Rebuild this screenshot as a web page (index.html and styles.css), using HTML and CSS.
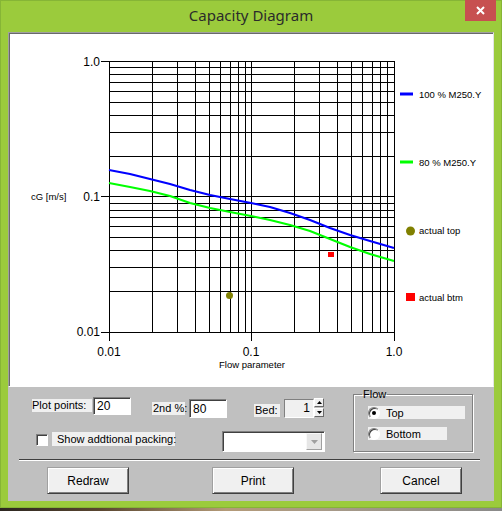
FILE: index.html
```html
<!DOCTYPE html>
<html lang="en">
<head>
    <meta charset="UTF-8">
    <title>Capacity Diagram</title>
    <link rel="stylesheet" href="styles.css">
</head>
<body>
    <div class="window">
        <div class="titlebar">
            <div class="title">Capacity Diagram</div>
            <div class="close">
                <svg width="9" height="9" viewBox="0 0 9 9"><path d="M1 1L8 8M8 1L1 8" stroke="#fff" stroke-width="2"/></svg>
            </div>
        </div>

        <div class="dialog">
            <div class="chart">
                <svg width="484" height="353" viewBox="9 33 484 353">
                    <!-- grid -->
                    <path class="grid" d="M109.5 61V333M152.5 61V333M177.5 61V333M195.5 61V333M209.5 61V333M220.5 61V333M230.5 61V333M238.5 61V333M245.5 61V333M251.5 61V333M294.5 61V333M319.5 61V333M337.5 61V333M351.5 61V333M362.5 61V333M372.5 61V333M380.5 61V333M387.5 61V333M394.5 61V333"/>
                    <path class="grid" d="M109 61.5H395M109 67.5H395M109 74.5H395M109 82.5H395M109 91.5H395M109 102.5H395M109 115.5H395M109 132.5H395M109 156.5H395M109 196.5H395M109 203.5H395M109 210.5H395M109 217.5H395M109 226.5H395M109 237.5H395M109 250.5H395M109 267.5H395M109 291.5H395M109 332.5H395"/>
                    <path class="grid" d="M101 61.5H109M101 196.5H109M101 332.5H109M109.5 333V341M251.5 333V341M394.5 333V341"/>

                    <!-- axis labels -->
                    <text class="num" x="100" y="66" text-anchor="end">1.0</text>
                    <text class="num" x="100" y="201" text-anchor="end">0.1</text>
                    <text class="num" x="100" y="336" text-anchor="end">0.01</text>
                    <text class="num" x="109" y="356" text-anchor="middle">0.01</text>
                    <text class="num" x="251" y="356" text-anchor="middle">0.1</text>
                    <text class="num" x="394" y="356" text-anchor="middle">1.0</text>
                    <text class="small" x="219" y="368">Flow parameter</text>
                    <text class="small" x="31" y="200">cG [m/s]</text>

                    <!-- curves -->
                    <polyline class="curve" stroke="#0000ff" points="109,170 130,174 150,179 170,184 190,190 210,195 230,199 251,203 270,207 290,213 310,220 330,228 350,235 370,241 394,248"/>
                    <polyline class="curve" stroke="#00ff00" points="109,183 130,187 150,191 170,196 190,203 210,208 230,212 251,216 270,220 290,225 310,231 330,239 350,247 370,254 394,261"/>

                    <!-- measured points -->
                    <circle cx="229.5" cy="295.5" r="3.5" fill="#808000"/>
                    <rect x="328" y="252" width="6" height="5" fill="#ff0000"/>

                    <!-- legend -->
                    <path d="M400 94H413" stroke="#0000ff" stroke-width="3"/>
                    <text class="small" x="419" y="98">100 % M250.Y</text>
                    <path d="M400 162H413" stroke="#00ff00" stroke-width="3"/>
                    <text class="small" x="419" y="166">80 % M250.Y</text>
                    <circle cx="410.5" cy="231" r="4.5" fill="#808000"/>
                    <text class="small" x="419" y="234">actual top</text>
                    <rect x="406" y="293" width="9" height="8" fill="#ff0000"/>
                    <text class="small" x="419" y="301">actual btm</text>
                </svg>
            </div>

            <div class="controls">
                <div class="form-area">
                    <div class="fields">
                        <div class="row row-top">
                            <span class="lbl lbl-plot">Plot points:</span>
                            <input class="edit edit-plot" type="text" value="20">
                            <span class="lbl lbl-2nd">2nd %:</span>
                            <input class="edit edit-2nd" type="text" value="80">
                            <span class="lbl lbl-bed">Bed:</span>
                            <div class="spin">
                                <span class="spin-val">1</span>
                                <div class="spin-btns">
                                    <span class="spin-btn"><svg width="5" height="3" viewBox="0 0 5 3"><path d="M2.5 0L5 3H0Z" fill="#000"/></svg></span>
                                    <span class="spin-btn"><svg width="5" height="3" viewBox="0 0 5 3"><path d="M0 0H5L2.5 3Z" fill="#000"/></svg></span>
                                </div>
                            </div>
                        </div>
                        <div class="row row-bottom">
                            <span class="check"></span>
                            <span class="lbl lbl-show">Show addtional packing:</span>
                            <div class="combo">
                                <span class="combo-btn"><svg width="7" height="4" viewBox="0 0 7 4"><path d="M0 0H7L3.5 4Z" fill="#a0a0a0"/></svg></span>
                            </div>
                        </div>
                    </div>

                    <fieldset class="flow">
                        <legend>Flow</legend>
                        <div class="radio-row radio-top"><span class="radio checked"></span>Top</div>
                        <div class="radio-row radio-bottom"><span class="radio"></span>Bottom</div>
                    </fieldset>
                </div>

                <div class="separator"></div>

                <div class="buttons">
                    <button class="btn btn-redraw">Redraw</button>
                    <button class="btn btn-print">Print</button>
                    <button class="btn btn-cancel">Cancel</button>
                </div>
            </div>
        </div>
    </div>
</body>
</html>
```

FILE: styles.css
```css
body {
    margin: 0;
    height: 511px;
    overflow: hidden;
    font-family: "Liberation Sans", Arial, sans-serif;
    background: linear-gradient(to right, #2c2620 0%, #5a4630 20%, #b49a78 45%, #a89a88 65%, #8a8a8a 100%);
}
.window {
    width: 502px;
    height: 508px;
    box-sizing: border-box;
    background: #9bcb3c;
    border: 1px solid #86b536;
    padding: 0 7px 6px;
    display: flex;
    flex-direction: column;
}
.titlebar {
    display: grid;
    grid-template-columns: 1fr auto 1fr;
    height: 31px;
    margin: 0 -7px;
}
.title {
    grid-column: 2;
    font-family: "Noto Sans", sans-serif;
    font-size: 15px;
    line-height: 20px;
    padding-top: 4px;
    color: #2b2b2b;
}
.close {
    grid-column: 3;
    justify-self: end;
    margin: -1px 5px 0 0;
    width: 31px;
    height: 21px;
    background: #c75050;
    display: flex;
    align-items: center;
    justify-content: center;
}
.dialog {
    height: 469px;
    background: #c0c0c0;
    display: flex;
    flex-direction: column;
}
.chart {
    height: 355px;
    box-sizing: border-box;
    border: 1px solid;
    border-color: #a0a0a0 #e3e3e3 #fff #a0a0a0;
    background: #fff;
    box-shadow: inset 1px 1px #696969;
}
.chart svg {
    display: block;
}
.grid {
    stroke: #000;
    stroke-width: 1;
    fill: none;
    shape-rendering: crispEdges;
}
.curve {
    fill: none;
    stroke-width: 2.2;
    stroke-linejoin: round;
}
.num {
    font-family: "Liberation Sans", Arial, sans-serif;
    font-size: 12px;
    fill: #000;
}
.small {
    font-family: "Liberation Sans", Arial, sans-serif;
    font-size: 9.5px;
    fill: #000;
}

/* controls under the chart */
.controls {
    font-size: 11px;
    color: #000;
}
.form-area {
    display: flex;
    height: 65px;
}
.fields {
    width: 345px;
    box-sizing: border-box;
    padding: 10px 0 0 24px;
}
.row {
    display: flex;
    align-items: flex-start;
}
.row-top {
    height: 22px;
}
.row-bottom {
    height: 21px;
    margin-top: 12px;
}
.lbl {
    background: #f0f0f0;
    line-height: 13px;
    height: 13px;
    white-space: nowrap;
}
.lbl-plot {
    width: 60px;
    margin-top: 2px;
}
.lbl-2nd {
    width: 32px;
    margin: 5px 0 0 21px;
    padding-left: 1px;
}
.lbl-bed {
    width: 25px;
    margin: 7px 0 0 27px;
    padding-left: 1px;
}
.lbl-show {
    width: 118px;
    height: 14px;
    line-height: 14px;
    padding-left: 5px;
    margin: 1px 0 0 4px;
}
.edit {
    box-sizing: border-box;
    width: 38px;
    margin: 0;
    padding: 0 0 0 3px;
    border: 1px solid;
    border-color: #808080 #fff #fff #808080;
    box-shadow: inset 1px 1px #404040;
    background: #fff;
    font-family: "Liberation Sans", Arial, sans-serif;
    font-size: 12px;
    color: #000;
    outline: none;
}
.edit-plot {
    height: 18px;
    margin-left: 1px;
}
.edit-2nd {
    height: 19px;
    margin: 2px 0 0 4px;
}
.spin {
    display: flex;
    margin: 1px 0 0 4px;
}
.spin-val {
    box-sizing: border-box;
    width: 30px;
    height: 19px;
    margin-top: 1px;
    padding-right: 3px;
    text-align: right;
    font-size: 12px;
    line-height: 17px;
    background: #f0f0f0;
    border: 1px solid;
    border-color: #808080 #fff #fff #808080;
}
.spin-btns {
    display: flex;
    flex-direction: column;
    width: 10px;
}
.spin-btn {
    height: 9px;
    box-sizing: border-box;
    background: #f0f0f0;
    border: 1px solid;
    border-color: #fff #696969 #696969 #fff;
    display: flex;
    align-items: center;
    justify-content: center;
    margin-bottom: 1px;
}
.check {
    width: 12px;
    height: 12px;
    box-sizing: border-box;
    margin: 3px 0 0 4px;
    background: #fff;
    border: 1px solid;
    border-color: #808080 #fff #fff #808080;
    box-shadow: inset 1px 1px #404040;
}
.combo {
    box-sizing: border-box;
    width: 103px;
    height: 21px;
    margin-left: 47px;
    background: #fff;
    border: 1px solid;
    border-color: #808080 #fff #fff #808080;
    box-shadow: inset 1px 1px #404040;
    display: flex;
    justify-content: flex-end;
    padding: 1px 2px 1px 0;
}
.combo-btn {
    box-sizing: border-box;
    width: 16px;
    height: 17px;
    background: #e6e6e6;
    border: 1px solid;
    border-color: #f8f8f8 #a0a0a0 #a0a0a0 #f8f8f8;
    display: flex;
    align-items: center;
    justify-content: center;
}
.flow {
    box-sizing: border-box;
    width: 120px;
    height: 64px;
    margin: 1px 0 0 0;
    padding: 0;
    min-width: 0;
    border: 1px solid #808080;
    box-shadow: inset 1px 1px #fff, 1px 1px #fff;
}
.flow legend {
    margin-left: 8px;
    padding: 0 1px;
    line-height: 13px;
    font-size: 11px;
}
.radio-row {
    display: flex;
    align-items: center;
    gap: 6px;
    height: 13px;
    margin-left: 14px;
    background: #f0f0f0;
}
.radio-top {
    width: 97px;
    margin-top: 5px;
}
.radio-bottom {
    width: 79px;
    margin-top: 8px;
}
.radio {
    box-sizing: border-box;
    width: 12px;
    height: 12px;
    border-radius: 50%;
    background: #fff;
    border: 1px solid;
    border-color: #808080 #fff #fff #808080;
    box-shadow: inset 1px 1px #404040;
    display: flex;
    align-items: center;
    justify-content: center;
}
.radio.checked::after {
    content: "";
    width: 4px;
    height: 4px;
    border-radius: 50%;
    background: #000;
}
.separator {
    width: 461px;
    margin: 7px 0 0 11px;
    border-top: 1px solid #404040;
    border-bottom: 1px solid #fff;
}
.buttons {
    display: flex;
    margin: 6px 0 0 39px;
}
.btn {
    width: 82px;
    height: 27px;
    box-sizing: border-box;
    padding: 0;
    background: #f0f0f0;
    border: 1px solid;
    border-color: #a0a0a0 #404040 #404040 #a0a0a0;
    box-shadow: inset 1px 1px #fff, inset -1px -1px #808080;
    font-family: "Liberation Sans", Arial, sans-serif;
    font-size: 12px;
    color: #000;
    cursor: pointer;
}
.btn-print {
    margin-left: 83px;
}
.btn-cancel {
    margin-left: 86px;
}
```
